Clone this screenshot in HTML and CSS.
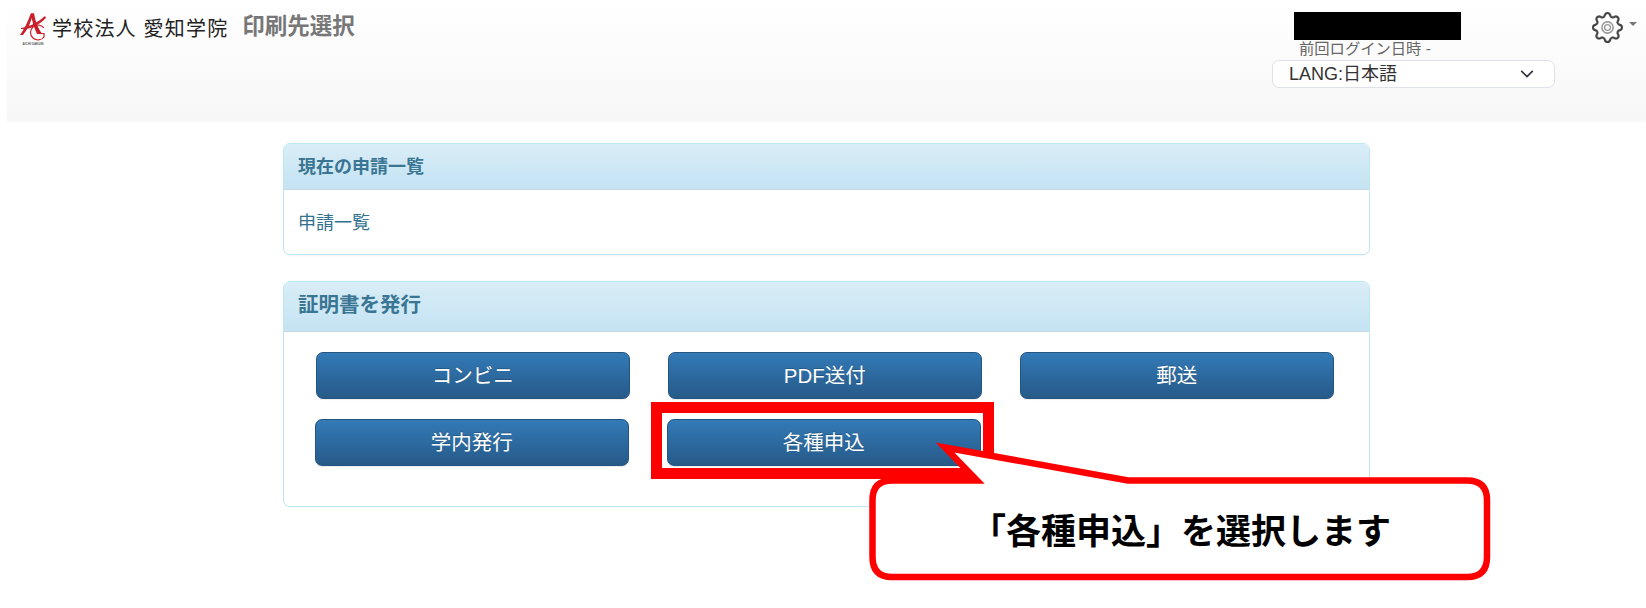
FILE: index.html
```html
<!DOCTYPE html>
<html lang="ja">
<head>
    <meta charset="UTF-8">
    <meta name="viewport" content="width=device-width, initial-scale=1.0">
    <title>印刷先選択</title>
    <link rel="stylesheet" href="styles.css">
</head>
<body>
    <header class="navbar">
        <div class="brand">
            <svg class="logo" width="30" height="34" viewBox="0 0 30 34">
                <path d="M2 22 C7 15 10 8 13 0 L15 1 C13 9 10 16 5 22Z" fill="#c9202c"/>
                <path d="M13 1 L16 0 C17 8 20 15 24 21 L19 21 C16 15 14 8 13 1Z" fill="#c9202c"/>
                <path d="M3 15 C11 14 19 10 27 3 L28 5 C21 12 12 17 3 16Z" fill="#c9202c"/>
                <path d="M26 15 A7.5 7.5 0 1 0 26 24 L26 20.5 L20 20.5" fill="none" stroke="#c9202c" stroke-width="1.2"/>
                <text x="15" y="31.5" text-anchor="middle" class="logo-text">AICHI GAKUIN</text>
            </svg>
            <span class="school">学校法人 愛知学院</span>
            <span class="page-title">印刷先選択</span>
        </div>
        <div class="user">
            <div class="user-name"></div>
            <div class="last-login">前回ログイン日時 -</div>
            <select class="lang">
                <option>LANG:日本語</option>
            </select>
        </div>
        <div class="settings">
            <svg class="gear" width="31" height="31" viewBox="0 0 16 16" fill="#444" stroke="#444" stroke-width=".15">
                <circle cx="8" cy="8" r="2.9" fill="none" stroke="#999" stroke-width=".8"/>
                <circle cx="8" cy="8" r="1.5" fill="none" stroke="#999" stroke-width=".7"/>
                <path d="M9.796 1.343c-.527-1.79-3.065-1.79-3.592 0l-.094.319a.873.873 0 0 1-1.255.52l-.292-.16c-1.64-.892-3.433.902-2.54 2.541l.159.292a.873.873 0 0 1-.52 1.255l-.319.094c-1.79.527-1.79 3.065 0 3.592l.319.094a.873.873 0 0 1 .52 1.255l-.16.292c-.892 1.64.901 3.434 2.541 2.54l.292-.159a.873.873 0 0 1 1.255.52l.094.319c.527 1.79 3.065 1.79 3.592 0l.094-.319a.873.873 0 0 1 1.255-.52l.292.16c1.64.893 3.434-.902 2.54-2.541l-.159-.292a.873.873 0 0 1 .52-1.255l.319-.094c1.79-.527 1.79-3.065 0-3.592l-.319-.094a.873.873 0 0 1-.52-1.255l.16-.292c.893-1.64-.902-3.433-2.541-2.54l-.292.159a.873.873 0 0 1-1.255-.52zm-2.633.283c.246-.835 1.428-.835 1.674 0l.094.319a1.873 1.873 0 0 0 2.693 1.115l.291-.16c.764-.415 1.6.42 1.184 1.185l-.159.292a1.873 1.873 0 0 0 1.116 2.692l.318.094c.835.246.835 1.428 0 1.674l-.319.094a1.873 1.873 0 0 0-1.115 2.693l.16.291c.415.764-.42 1.6-1.185 1.184l-.291-.159a1.873 1.873 0 0 0-2.693 1.116l-.094.318c-.246.835-1.428.835-1.674 0l-.094-.319a1.873 1.873 0 0 0-2.692-1.115l-.292.16c-.764.415-1.6-.42-1.184-1.185l.159-.291A1.873 1.873 0 0 0 1.945 8.93l-.319-.094c-.835-.246-.835-1.428 0-1.674l.319-.094A1.873 1.873 0 0 0 3.06 4.377l-.16-.292c-.415-.764.42-1.6 1.185-1.184l.292.159a1.873 1.873 0 0 0 2.692-1.115z"/>
            </svg>
            <span class="caret"></span>
        </div>
    </header>

    <main class="container">
        <section class="panel panel-list">
            <h3 class="panel-heading">現在の申請一覧</h3>
            <div class="panel-body">
                <a class="list-link" href="#">申請一覧</a>
            </div>
        </section>

        <section class="panel">
            <h3 class="panel-heading panel-heading-large">証明書を発行</h3>
            <div class="panel-body buttons">
                <div class="btn-row btn-row-first">
                    <button class="btn">コンビニ</button>
                    <button class="btn">PDF送付</button>
                    <button class="btn">郵送</button>
                </div>
                <div class="btn-row">
                    <button class="btn">学内発行</button>
                    <button class="btn">各種申込</button>
                </div>
            </div>
        </section>
    </main>

    <!-- annotation drawn on top of the screenshot -->
    <div class="highlight"></div>
    <div class="callout">
        <svg class="callout-shape" width="640" height="150" viewBox="860 436 640 150">
            <path d="M892 480.5 L977 480.5 L945 447.5 L1128 480.5 L1467 480.5 Q1487 480.5 1487 500 L1487 557 Q1487 577 1467 577 L892 577 Q872.5 577 872.5 557 L872.5 500 Q872.5 480.5 892 480.5Z" fill="#fff" stroke="#f00" stroke-width="6.5" stroke-linejoin="miter"/>
        </svg>
        <div class="callout-text">「各種申込」を選択します</div>
    </div>
</body>
</html>
```

FILE: styles.css
```css
* {
    box-sizing: border-box;
}

body {
    margin: 0;
    background: #fff;
    font-family: "Liberation Sans", "Noto Sans CJK JP", sans-serif;
    color: #333;
}

.navbar {
    display: flex;
    height: 121px;
    margin-left: 7px;
    padding-right: 9px;
    background: linear-gradient(to bottom, #fff 0%, #f7f7f7 100%);
    box-shadow: 0 1px 2px rgba(0, 0, 0, 0.03);
}

.brand {
    display: flex;
    align-items: flex-start;
    flex: 1;
    padding: 13px 0 0 11px;
}

.logo {
    flex-shrink: 0;
    margin-right: 4px;
}

.logo-text {
    font-size: 3px;
    font-weight: bold;
    fill: #555;
}

.school {
    margin-top: 2px;
    font-size: 20px;
    line-height: 28px;
    letter-spacing: 1.2px;
    color: #222;
    white-space: nowrap;
}

.page-title {
    margin-left: 14px;
    font-size: 22.5px;
    font-weight: bold;
    line-height: 28px;
    color: #777;
}

.user {
    width: 283px;
    margin-right: 37px;
    padding-top: 12px;
}

.user-name {
    width: 167px;
    height: 28px;
    margin-left: 22px;
    background: #000;
}

.last-login {
    height: 20px;
    margin-left: 27px;
    font-size: 15.3px;
    line-height: 18px;
    color: #666;
    white-space: nowrap;
}

.lang {
    display: block;
    width: 100%;
    height: 28px;
    padding: 0 16px;
    border: 1px solid #dee2e6;
    border-radius: 7px;
    background: #fff url("data:image/svg+xml,%3Csvg xmlns='http://www.w3.org/2000/svg' viewBox='0 0 16 16'%3E%3Cpath fill='none' stroke='%23343a40' stroke-linecap='round' stroke-linejoin='round' stroke-width='2' d='m2 5 6 6 6-6'/%3E%3C/svg%3E") no-repeat right 18px center / 18px 14px;
    font-family: inherit;
    font-size: 18px;
    color: #333;
    appearance: none;
}

.settings {
    display: flex;
    align-items: flex-start;
    padding-top: 12px;
}

.caret {
    width: 0;
    height: 0;
    margin: 10px 0 0 6px;
    border-top: 4px solid #777;
    border-left: 4.5px solid transparent;
    border-right: 4.5px solid transparent;
}

.container {
    width: 1087px;
    margin: 22px 0 0 283px;
}

.panel {
    border: 1px solid #bce8f1;
    border-radius: 7px;
    background: #fff;
    box-shadow: 0 1px 2px rgba(0, 0, 0, 0.05);
}

.panel-list {
    height: 112px;
    margin-bottom: 26px;
}

.panel-heading {
    height: 46px;
    margin: 0;
    padding: 0 14px;
    border-bottom: 1px solid #c8d8e2;
    border-radius: 6px 6px 0 0;
    background: linear-gradient(to bottom, #d9edf7 0%, #c4e3f3 100%);
    font-size: 18px;
    font-weight: bold;
    line-height: 46px;
    color: #3a7693;
}

.panel-heading-large {
    height: 50px;
    font-size: 20.5px;
    line-height: 46px;
}

.panel-body {
    padding: 20px 14px;
}

.list-link {
    font-size: 18px;
    line-height: 26px;
    color: #31708f;
    text-decoration: none;
}

.buttons {
    display: flex;
    flex-direction: column;
    gap: 20px;
    padding: 20px 0 40px 30.5px;
}

.btn-row {
    display: flex;
    gap: 37.5px;
}

.btn-row-first {
    margin-left: 1px;
}

.btn {
    width: 314.5px;
    height: 47px;
    padding: 0 0 3px;
    border: 1px solid #245580;
    border-radius: 7px;
    background: linear-gradient(to bottom, #337ab7 0%, #265a88 100%);
    font-family: inherit;
    font-size: 20.5px;
    color: #fff;
    text-shadow: 0 -1px 0 rgba(0, 0, 0, 0.2);
    box-shadow: 0 1px 1px rgba(0, 0, 0, 0.08);
}

.highlight {
    position: absolute;
    left: 651px;
    top: 402px;
    width: 343px;
    height: 77px;
    border: 11px solid #f00;
}

.callout {
    position: absolute;
    left: 860px;
    top: 436px;
    width: 640px;
    height: 150px;
}

.callout-shape {
    display: block;
}

.callout-text {
    position: absolute;
    left: 111px;
    top: 71px;
    font-size: 35px;
    font-weight: bold;
    line-height: 50px;
    color: #000;
    white-space: nowrap;
}
```
